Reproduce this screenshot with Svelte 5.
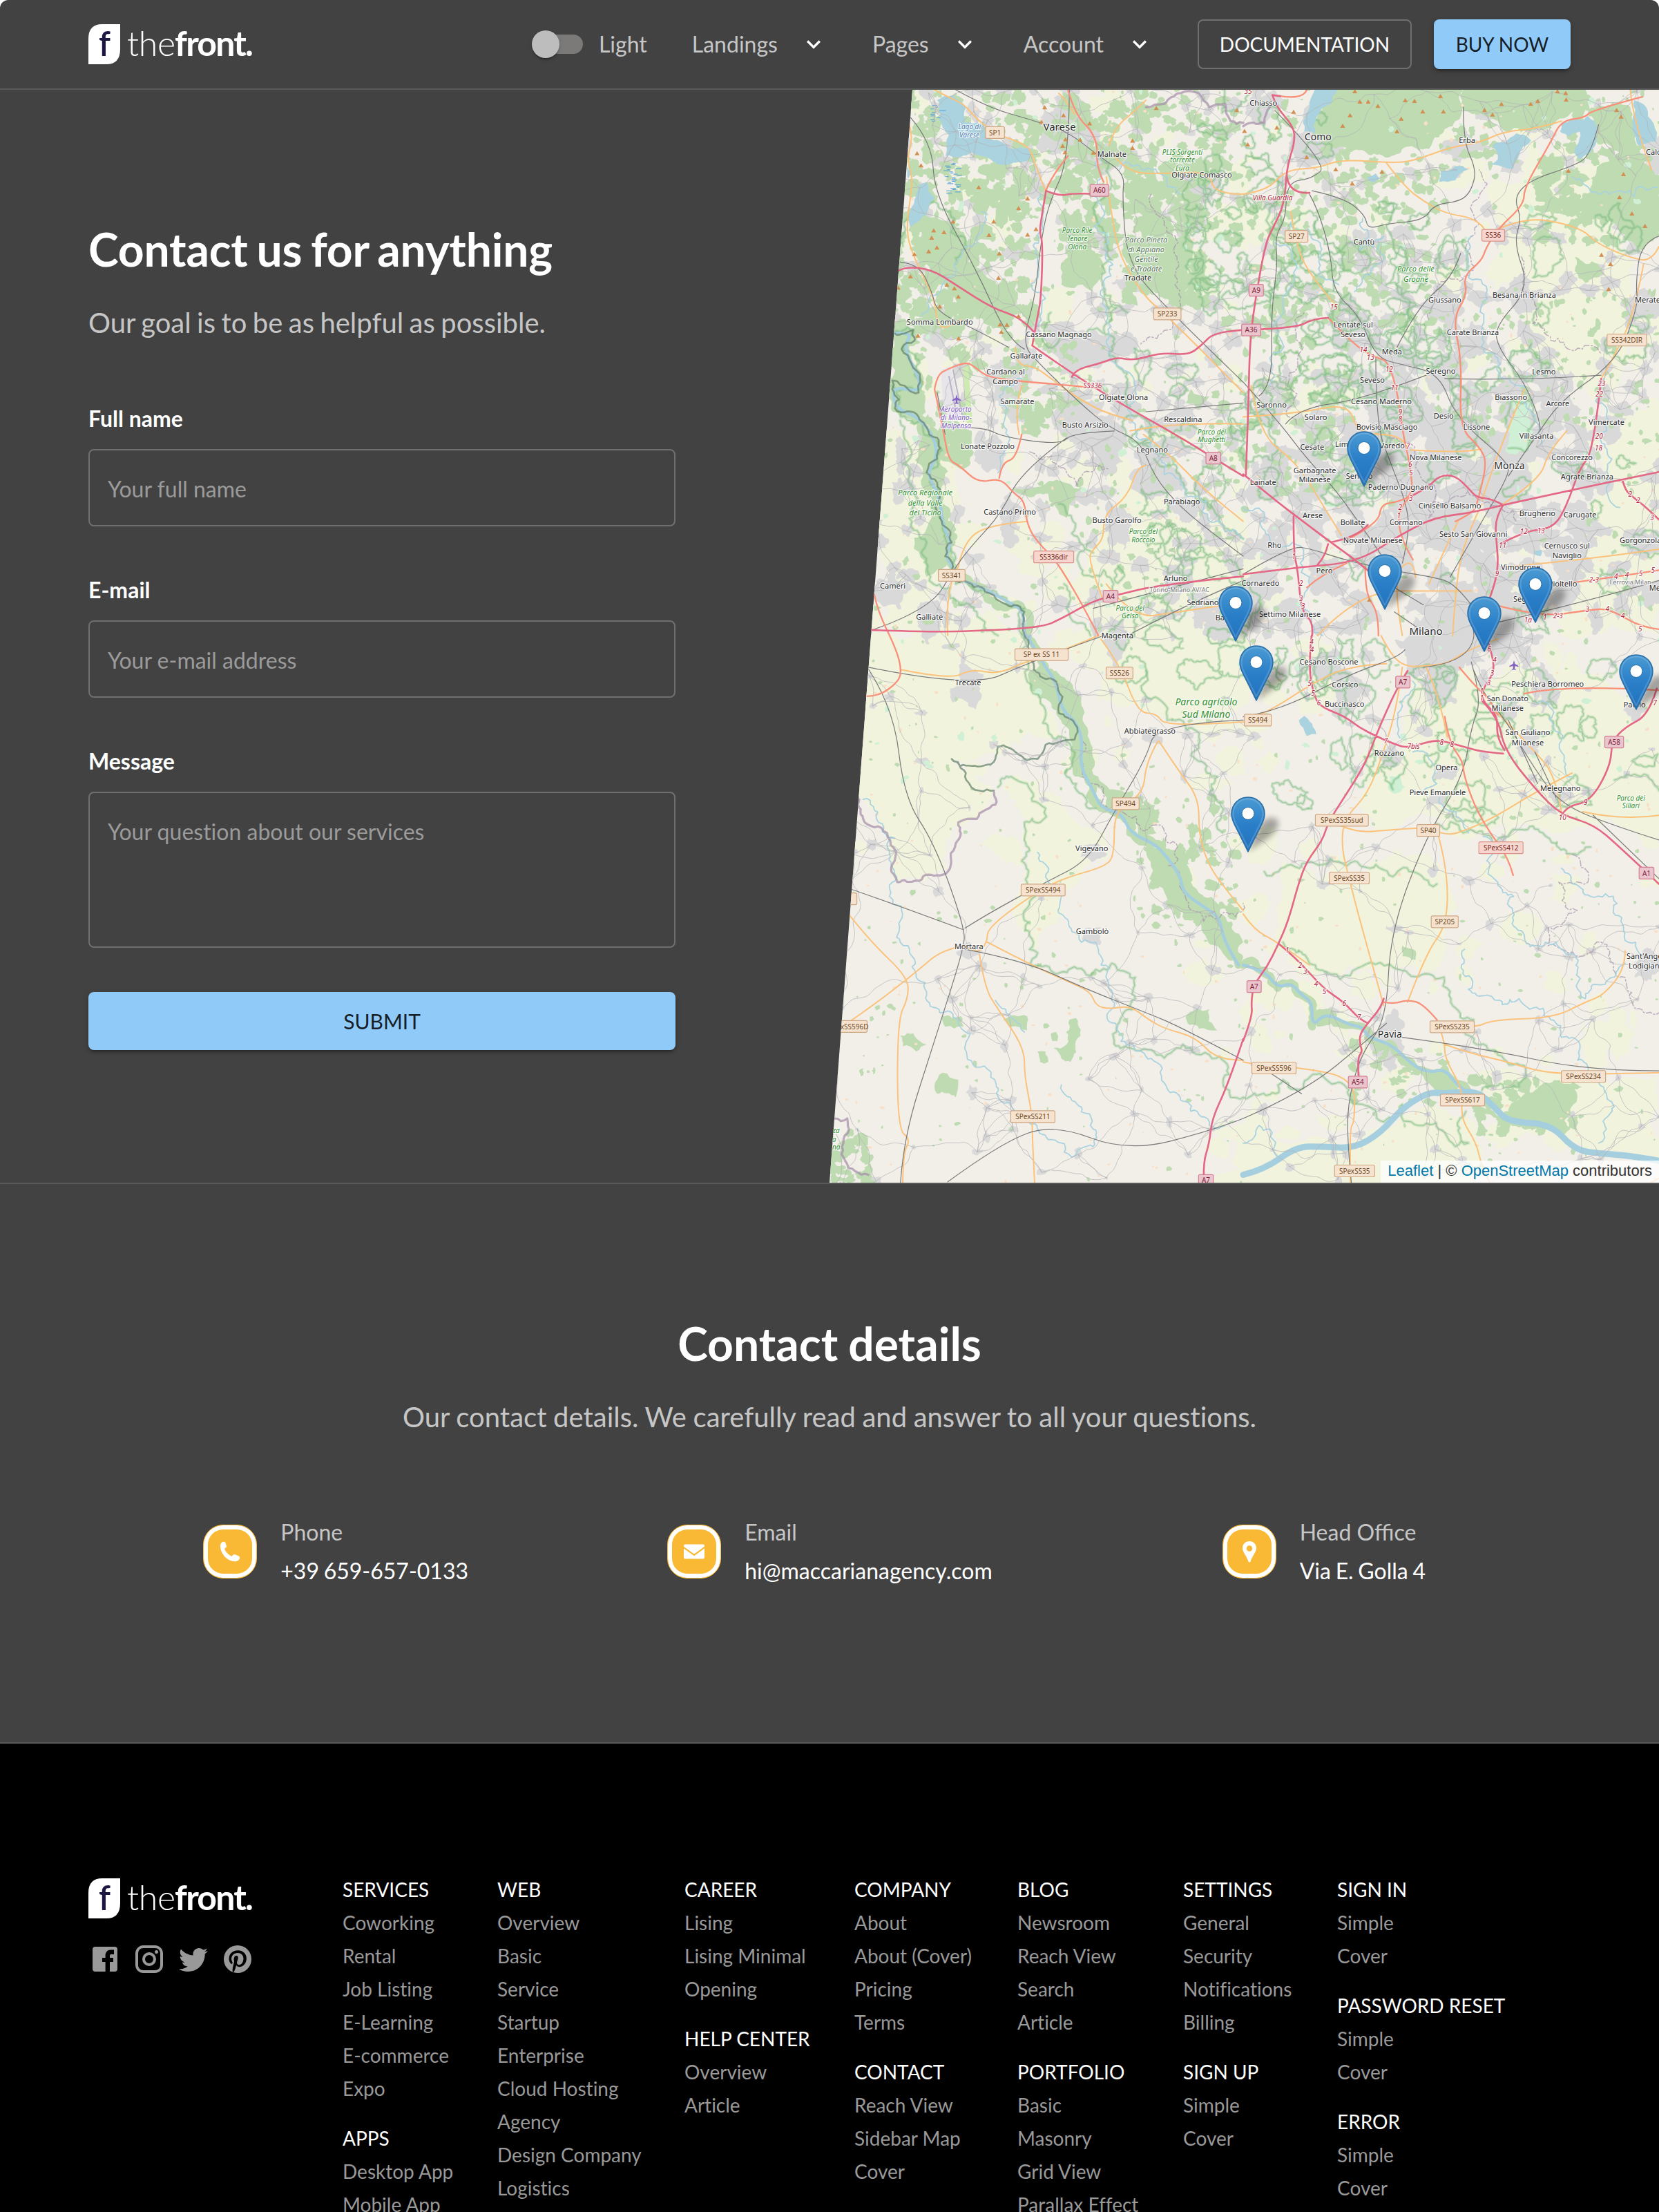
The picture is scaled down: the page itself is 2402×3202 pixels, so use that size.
<script>
  // ---------- site content ----------
  const fields = [
    { label: 'Full name', hint: 'Your full name' },
    { label: 'E-mail', hint: 'Your e-mail address' },
    { label: 'Message', hint: 'Your question about our services', tall: true }
  ];
  const contacts = [
    { icon: 'phone', label: 'Phone', value: '+39 659-657-0133' },
    { icon: 'mail', label: 'Email', value: 'hi@maccarianagency.com' },
    { icon: 'pin', label: 'Head Office', value: 'Via E. Golla 4' }
  ];
  const columns = [
    [['SERVICES', 'Coworking', 'Rental', 'Job Listing', 'E-Learning', 'E-commerce', 'Expo'], ['APPS', 'Desktop App', 'Mobile App']],
    [['WEB', 'Overview', 'Basic', 'Service', 'Startup', 'Enterprise', 'Cloud Hosting', 'Agency', 'Design Company', 'Logistics']],
    [['CAREER', 'Lising', 'Lising Minimal', 'Opening'], ['HELP CENTER', 'Overview', 'Article']],
    [['COMPANY', 'About', 'About (Cover)', 'Pricing', 'Terms'], ['CONTACT', 'Reach View', 'Sidebar Map', 'Cover']],
    [['BLOG', 'Newsroom', 'Reach View', 'Search', 'Article'], ['PORTFOLIO', 'Basic', 'Masonry', 'Grid View', 'Parallax Effect']],
    [['SETTINGS', 'General', 'Security', 'Notifications', 'Billing'], ['SIGN UP', 'Simple', 'Cover']],
    [['SIGN IN', 'Simple', 'Cover'], ['PASSWORD RESET', 'Simple', 'Cover'], ['ERROR', 'Simple', 'Cover']]
  ];
  const social = [
    'M5 3h14a2 2 0 0 1 2 2v14a2 2 0 0 1-2 2h-3.500v-7h2.500v-3h-2.500V9.500c0-.8.700-1 1-1h2V5.300h-2.500C14 5.300 12.300 7 12.300 9.300V11H10v3h2.300v7H5a2 2 0 0 1-2-2V5a2 2 0 0 1 2-2z',
    'M7.800 2h8.400C19.400 2 22 4.600 22 7.800v8.400a5.800 5.800 0 0 1-5.800 5.800H7.800C4.600 22 2 19.400 2 16.200V7.800A5.800 5.800 0 0 1 7.800 2m-.2 2A3.600 3.600 0 0 0 4 7.600v8.800C4 18.390 5.610 20 7.600 20h8.800a3.600 3.600 0 0 0 3.600-3.600V7.600C20 5.610 18.390 4 16.400 4H7.600m9.650 1.500a1.250 1.250 0 1 1 0 2.500 1.250 1.250 0 0 1 0-2.500M12 7a5 5 0 1 1 0 10 5 5 0 0 1 0-10m0 2a3 3 0 1 0 0 6 3 3 0 0 0 0-6z',
    'M22.460 6c-.77.350-1.600.580-2.460.690.880-.53 1.560-1.370 1.880-2.380-.83.500-1.750.850-2.720 1.050C18.370 4.500 17.260 4 16 4c-2.350 0-4.270 1.920-4.270 4.290 0 .340.040.670.110.980C8.280 9.090 5.110 7.380 3 4.790c-.37.630-.58 1.370-.58 2.150 0 1.490.750 2.810 1.910 3.560-.71 0-1.370-.2-1.950-.5v.030c0 2.080 1.480 3.820 3.440 4.210a4.220 4.220 0 0 1-1.930.070 4.280 4.280 0 0 0 4 2.980 8.521 8.521 0 0 1-5.330 1.840c-.34 0-.68-.02-1.020-.06C3.440 20.290 5.700 21 8.120 21 16 21 20.330 14.460 20.330 8.790c0-.19 0-.37-.01-.56.840-.6 1.560-1.360 2.140-2.230z',
    'M9.040 21.540c.960.290 1.930.460 2.960.460a10 10 0 0 0 10-10A10 10 0 0 0 12 2 10 10 0 0 0 2 12c0 4.250 2.670 7.900 6.440 9.340-.09-.78-.18-2.070 0-2.960l1.150-4.940s-.29-.58-.29-1.500c0-1.380.860-2.410 1.840-2.410.860 0 1.260.630 1.260 1.440 0 .860-.57 2.090-.86 3.270-.17.980.520 1.840 1.520 1.840 1.780 0 3.160-1.900 3.160-4.580 0-2.400-1.720-4.040-4.190-4.040-2.820 0-4.480 2.100-4.480 4.310 0 .860.280 1.730.740 2.300.090.060.090.140.060.290l-.29 1.090c0 .170-.11.230-.28.110-1.280-.56-2.020-2.380-2.020-3.850 0-3.160 2.240-6.030 6.560-6.030 3.440 0 6.120 2.470 6.120 5.750 0 3.440-2.130 6.200-5.180 6.200-.97 0-1.920-.52-2.260-1.130l-.67 2.370c-.23.860-.86 2.010-1.290 2.700v-.03z'
  ];

  // ---------- map geometry ----------
  // The map is described on four sheets, each with its own 1568-unit grid.
  const sheets = {
    A: [1200, 130, 600 / 1568, 790 / 1568],
    B: [1800, 130, 602 / 1568, 790 / 1568],
    C: [1200, 920, 600 / 1568, 800 / 1568],
    D: [1800, 920, 602 / 1568, 800 / 1568]
  };
  const at = (q, x, y) => [sheets[q][0] + x * sheets[q][2], sheets[q][1] + y * sheets[q][3]];
  const pts = (s) => {
    const q = s[0];
    const n = s.slice(2).trim().split(/\s+/).map(Number);
    const out = [];
    for (let i = 0; i < n.length; i += 2) out.push(at(q, n[i], n[i + 1]));
    return out;
  };
  let seed = 20417;
  const rnd = () => {
    seed = (seed + 0x6d2b79f5) | 0;
    let t = Math.imul(seed ^ (seed >>> 15), 1 | seed);
    t = (t + Math.imul(t ^ (t >>> 7), 61 | t)) ^ t;
    return ((t ^ (t >>> 14)) >>> 0) / 4294967296;
  };
  const f = (v) => v.toFixed(1);
  const line = (p, close = false) => 'M' + p.map(([x, y]) => f(x) + ' ' + f(y)).join('L') + (close ? 'Z' : '');
  function smooth(p) {
    if (p.length < 3) return line(p);
    let d = `M${f(p[0][0])} ${f(p[0][1])}`;
    for (let i = 1; i < p.length - 1; i++) {
      const last = i === p.length - 2;
      const ex = last ? p[i + 1][0] : (p[i][0] + p[i + 1][0]) / 2;
      const ey = last ? p[i + 1][1] : (p[i][1] + p[i + 1][1]) / 2;
      d += `Q${f(p[i][0])} ${f(p[i][1])} ${f(ex)} ${f(ey)}`;
    }
    return d;
  }
  function rough(p, amp = 0.16, min = 7) {
    let cur = p;
    for (let k = 0; k < 4; k++) {
      const next = [cur[0]];
      for (let i = 1; i < cur.length; i++) {
        const [ax, ay] = cur[i - 1];
        const [bx, by] = cur[i];
        const len = Math.hypot(bx - ax, by - ay);
        if (len > min) {
          const o = (rnd() - 0.5) * 2 * amp;
          next.push([(ax + bx) / 2 - (by - ay) * o, (ay + by) / 2 + (bx - ax) * o]);
        }
        next.push([bx, by]);
      }
      cur = next;
    }
    return cur;
  }
  function blob(x, y, r, n = 9, wild = 0.75) {
    const p = [];
    const sx = 0.7 + rnd() * 0.7;
    for (let i = 0; i < n; i++) {
      const a = (i / n) * Math.PI * 2;
      const k = r * (1 - wild / 2 + rnd() * wild);
      p.push([x + Math.cos(a) * k * sx, y + (Math.sin(a) * k) / sx]);
    }
    p.push(p[0]);
    return line(rough(p, 0.3, 5), true);
  }
  const roads = (list) => list.map((s) => smooth(pts(s))).join('');
  const ragged = (list, amp = 0.22) => list.map((s) => line(rough(pts(s), amp))).join('');
  const area = (list, amp = 0.22) => list.map((s) => { const p = pts(s); p.push(p[0]); return line(rough(p, amp), true); }).join('');

  const towns = `A 873 110 Varese 15|A 1071 184 Malnate|A 1411 245 Olgiate Comasco|A 1170 539 Tradate|A 420 666 Somma Lombardo|A 870 702 Cassano Magnago|A 747 764 Gallarate|A 669 809 Cardano al|A 668 838 Campo|A 713 896 Samarate|A 1115 884 Olgiate Olona|A 970 962 Busto Arsizio|A 1340 946 Rescaldina|A 601 1025 Lonate Pozzolo|A 1224 1034 Legnano|A 1336 1183 Parabiago|A 685 1212 Castano Primo|A 1090 1237 Busto Garolfo|A 1312 1403 Arluno|A 1415 1473 Sedriano|A 242 1426 Cameri|A 381 1514 Galliate|A 1480 1516 Ba|B 76 37 Chiasso|B 282 137 Como 14|B 844 145 Erba|B 1555 178 Calco|B 456 436 Cantù|B 760 603 Giussano|B 1060 590 Besana in Brianza|B 1525 603 Merate|B 415 674 Lentate sul|B 414 702 Seveso|B 866 696 Carate Brianza|B 561 753 Meda|B 745 807 Seregno|B 487 833 Seveso|B 1134 809 Lesmo|B 521 896 Cesano Maderno|B 1010 883 Biassono|B 1186 902 Arcore|B 107 906 Saronno|B 274 940 Solaro|B 756 936 Desio|B 542 968 Bovisio Masciago|B 880 968 Lissone|B 1370 954 Vimercate|B 1106 994 Villasanta|B 260 1027 Cesate|B 405 1018 Limbiate|B 562 1023 Varedo|B 726 1056 Nova Milanese|B 1240 1055 Concorezzo|B 1004 1081 Monza 14|B 270 1093 Garbagnate|B 270 1120 Milanese|B 438 1110 Senago|B 1297 1111 Agrate Brianza|B 75 1128 Lainate|B 594 1142 Paderno Dugnano|B 779 1194 Cinisello Balsamo|B 262 1222 Arese|B 1109 1216 Brugherio|B 1270 1220 Carugate|B 413 1243 Bollate|B 614 1243 Cormano|B 489 1294 Novate Milanese|B 868 1277 Sesto San Giovanni|B 1221 1309 Cernusco sul|B 1221 1338 Naviglio|B 1498 1295 Gorgonzola|B 118 1307 Rho|B 1046 1372 Vimodrone|B 306 1382 Pero|B 65 1418 Cornaredo|B 1205 1420 Pioltello|B 1552 1432 Me|B 1070 1463 Segrate|B 176 1506 Settimo Milanese|B 689 1559 Milano 15|C 1092 0 Magenta|C 527 134 Trecate|C 1215 271 Abbiategrasso|C 995 603 Vigevano|C 997 838 Gambolò|C 530 882 Mortara|D 323 74 Cesano Boscone|D 384 140 Corsico|D 382 195 Buccinasco|D 551 333 Rozzano|D 767 375 Opera|D 733 444 Pieve Emanuele|D 1148 137 Peschiera Borromeo|D 997 178 San Donato|D 997 206 Milanese|D 1073 275 San Giuliano|D 1073 303 Milanese|D 1196 433 Melegnano|D 1476 196 Paullo|D 1525 909 Sant'Angelo|D 1520 937 Lodigiano|D 553 1133 Pavia 14`
    .split('|')
    .map((t) => {
      const m = t.match(/^(\w) (\d+) (\d+) (.+?)(?: (\d+))?$/);
      const [x, y] = at(m[1], +m[2], +m[3]);
      return { x, y: y + 4, name: m[4], size: m[5] ? +m[5] : 11 };
    });
  const parks = `A 1338 178 PLIS Sorgenti 10|A 1338 201 torrente 10|A 1338 224 Lura 10|A 940 403 Parco Rile 10|A 940 427 Tenore 10|A 940 451 Olona 10|A 1449 982 Parco dei 10|A 1449 1005 Mughetti 10|A 365 1157 Parco Regionale 11|A 365 1186 della Valle 11|A 365 1214 del Ticino 11|A 1190 1269 Parco del 10|A 1190 1292 Roccolo 10|A 1140 1488 Parco del 10|A 1140 1511 Gelso 10|B 651 515 Parco delle 11|B 651 544 Groane 11|C 1428 191 Parco agricolo 14|C 1428 226 Sud Milano 14|D 1462 460 Parco dei 10|D 1462 483 Sillari 10|C 28 1404 za 10|C 20 1428 a 10|C 28 1450 na 10`
    .split('|').map((t) => {
      const m = t.match(/^(\w) (\d+) (\d+) (.+) (\d+)$/);
      const [x, y] = at(m[1], +m[2], +m[3]);
      return { x, y: y + 4, name: m[4], size: +m[5] };
    });
  const special = [
    ['A', 532, 106, 'Lago di', 'lake'], ['A', 532, 130, 'Varese', 'lake'],
    ['A', 1201, 430, 'Parco Pineta', 'reserve'], ['A', 1201, 458, 'di Appiano', 'reserve'], ['A', 1201, 486, 'Gentile', 'reserve'], ['A', 1201, 514, 'e Tradate', 'reserve'],
    ['A', 482, 917, 'Aeroporto', 'airport'], ['A', 482, 941, 'di Milano-', 'airport'], ['A', 482, 965, 'Malpensa', 'airport'],
    ['A', 998, 850, 'SS336', 'exit'], ['B', 111, 309, 'Villa Guardia', 'exit'], ['B', 18, 4, '35', 'exit'],
    ['A', 1327, 1436, 'Torino-Milano AV/AC', 'rail'], ['B', 1460, 1414, 'Ferrovia Milan', 'rail']
  ].map(([q, x, y, name, kind]) => ({ x: at(q, x, y)[0], y: at(q, x, y)[1] + 4, name, kind }));
  const exits = `B 342 623 15|B 453 746 14|B 480 768 13|B 550 801 12|B 571 856 11|B 592 924 9|B 592 944 8|B 621 1025 7|B 630 1076 6|B 632 1100 5|B 632 1174 3|B 592 1199 2|B 587 1222 1|B 1351 843 23|B 1343 873 22|B 1342 994 20|B 1340 1028 18|B 1459 1162 2|B 1490 1178 2|B 1542 1228 3|B 1058 1268 12|B 1123 1267 13|B 978 1307 11|B 957 1390 9|B 191 1340 1|B 218 1418 2|B 218 1461 3|B 226 1482 3|B 1323 1408 2-3|B 1406 1398 4|B 1447 1394 4|B 1499 1389 5|B 1545 1379 5|B 1074 1522 1a|B 1138 1514 1|B 1187 1511 2-3|B 1298 1493 3|B 1373 1491 4|B 1432 1511 4|B 1497 1549 5|D 258 18 4|D 259 40 4|D 250 136 5|D 263 162 5|D 285 191 6|D 538 297 7|D 642 314 7bis|D 748 301 8|D 787 307 8|D 927 38 6|D 948 68 4|D 939 106 3|D 926 134 3|D 899 156 1|D 899 176 1|D 1291 472 9|D 1204 516 10|D 1553 190 7|D 166 892 1|D 214 934 2|D 234 953 3|D 275 987 4|D 306 1009 5|D 381 1043 6|D 437 1081 7`
    .split('|').map((t) => { const [q, x, y, n] = t.split(' '); const p = at(q, +x, +y); return { x: p[0], y: p[1] + 4, n }; });
  const shields = `A 629 123 71 o SP1|A 1024 289 71 m A60|A 1281 644 103 o SP233|A 1455 1058 56 m A8|A 851 1342 151 t SS336dir|A 465 1395 101 o SS341|A 1066 1455 56 m A4|B 201 421 86 o SP27|B 943 418 86 t SS36|B 49 576 54 m A9|B 30 690 72 m A36|B 1447 719 150 o SS342DIR|C 805 54 201 o SP ex SS 11|C 1100 106 101 o SS526|C 1123 477 102 o SP494|C 811 722 166 o SPexSS494|C 75 1109 140 o SPexSS596D|C 60 747 92 o SS|C 772 1365 167 o SPexSS211|C 1427 1546 56 m A7|D 602 132 54 m A7|D 55 240 102 o SS494|D 372 524 200 o SPexSS35sud|D 698 553 86 o SP40|D 972 602 167 t SPexSS412|D 400 688 151 o SPexSS35|D 1399 302 71 m A58|D 1521 674 56 m A1|D 760 812 102 o SP205|D 41 996 54 m A7|D 788 1110 167 o SPexSS235|D 116 1227 167 o SPexSS596|D 432 1267 71 m A54|D 827 1318 167 o SPexSS617|D 1283 1251 167 o SPexSS234|D 420 1519 151 o SPexSS35`
    .split('|').map((t) => {
      const m = t.match(/^(\w) (\d+) (\d+) (\d+) (\w) (.+)$/);
      const [x, y] = at(m[1], +m[2], +m[3]);
      return { x, y, w: +m[4] * 0.3835, kind: m[5], name: m[6] };
    });
  const peaks = `A 817 50 888 73 805 92 896 142 885 161 894 179 951 143 987 96 1001 180 1149 146 1149 167 1239 52 1544 58 334 182 349 217 567 280 752 312 718 340 784 400 752 416 624 378 606 417 645 470 642 540 397 404 436 409 389 425 409 453 378 464 470 378 324 472 309 536 447 560 475 570 490 594 420 622 337 706 491 714 718 650 674 675 648 674 653 695 262 568|B 421 4 440 34 471 34 508 46 611 30 646 32 677 62 744 18 755 62 596 83 580 119 403 73 375 103 190 63 127 108 5 118 17 157 239 193 349 228 411 269 523 235 910 58 940 71 974 40 1084 40 1111 32 1185 4 1216 9 1218 28 1226 232 1408 58 1425 77 1434 242 1419 308 1466 355 1515 391 1351 474 1385 500 1378 572 476 1465`
    .split('|').flatMap((s) => pts(s)).map(([x, y]) => `M${f(x)} ${f(y - 3)}l3.600 6h-7.200z`).join('');

  // Scattered land cover
  const woodZones = [
    [1320, 130, 1560, 300, 120, 9], [1290, 240, 1500, 480, 150, 12], [1540, 230, 1620, 380, 60, 10],
    [1630, 240, 1740, 440, 90, 13], [1560, 130, 1800, 250, 110, 8], [1800, 250, 2080, 470, 160, 8],
    [1850, 130, 2402, 260, 110, 8], [2230, 230, 2402, 350, 80, 12], [1290, 420, 1420, 620, 60, 9],
    [1850, 430, 1960, 720, 100, 7], [1450, 470, 1560, 620, 70, 7], [1640, 150, 1800, 420, 90, 7], [1200, 1640, 1260, 1712, 40, 8],
    [2130, 1560, 2290, 1640, 40, 10], [1650, 1150, 1790, 1350, 70, 8], [1950, 1500, 2100, 1600, 30, 7], [1760, 460, 1850, 700, 60, 6],
    [2080, 420, 2402, 640, 110, 5], [1560, 640, 1800, 900, 60, 5]
  ];
  let woods = '';
  for (const [x0, y0, x1, y1, n, r] of woodZones)
    for (let i = 0; i < n; i++) woods += blob(x0 + rnd() * (x1 - x0), y0 + rnd() * (y1 - y0), r * (0.35 + rnd() * 0.9), 7);
  for (let i = 0; i < 900; i++) {
    const y = 130 + Math.pow(rnd(), 1.4) * 1582;
    woods += blob(1201 + rnd() * 1201, y, 1.2 + rnd() * (y < 900 ? 4.5 : 3), 6);
  }
  let farmland = '';
  for (let i = 0; i < 420; i++) {
    const x = 1201 + rnd() * 1201;
    const y = 130 + rnd() * 1582;
    if (x < 1700 && y > 1240) continue;
    farmland += blob(x, y, 6 + rnd() * 20, 8);
  }
  const bigFarm = area(['A 200 980 420 1010 400 1320 460 1568 160 1568', 'C 155 0 740 0 800 180 900 290 640 340 480 350 620 440 560 520 480 540 450 660 260 700 220 560 120 460', 'A 1100 1100 1568 1200 1568 1568 1000 1568 980 1300', 'D 150 640 700 620 740 940 540 960 300 960 120 850', 'D 650 120 1568 180 1568 560 1200 560 900 560 500 560 460 380', 'C 740 530 900 480 1050 560 1060 640 900 720 780 900 740 700', 'D 0 1420 400 1470 700 1330 900 1450 860 1568 0 1568', 'B 950 250 1400 300 1500 700 1330 900 1000 560', 'D 880 1240 1568 1250 1568 1480 1250 1440 950 1350', 'B 1350 900 1568 900 1568 1568 1200 1568 1300 1200', 'C 900 0 1568 0 1568 200 1280 240 1180 220 1060 100']);

  // Settlements and the lanes that link them
  const nodes = [];
  while (nodes.length < 700) {
    const x = 1195 + rnd() * 1215;
    const y = 125 + rnd() * 1592;
    const metro = Math.exp(-(((x - 2080) / 260) ** 2) - ((y - 760) / 280) ** 2);
    const d = y < 920 ? 0.55 + metro * 0.7 : 0.2 + metro * 0.7;
    if (rnd() < d && nodes.every((n) => Math.hypot(n[0] - x, n[1] - y) > 17)) nodes.push([x, y, metro]);
  }
  let lanes = '';
  nodes.forEach((a, i) => {
    nodes
      .map((b, j) => [Math.hypot(a[0] - b[0], a[1] - b[1]), j])
      .sort((p, q) => p[0] - q[0])
      .slice(1, 5)
      .forEach(([, j]) => {
        if (j > i || rnd() < 0.15) lanes += smooth(rough([[a[0], a[1]], [nodes[j][0], nodes[j][1]]], 0.17, 12));
      });
  });
  let built = '';
  let specks = '';
  for (const [x, y, m] of nodes) built += blob(x, y, (y < 920 ? 7 : 2.5) + rnd() * 6 + m * 9, 10);
  for (const t of towns) built += blob(t.x, t.y + 4, t.size > 12 ? 32 : t.y < 1010 ? 24 : 14, 12);
  for (let i = 0; i < 14; i++) built += blob(2050 + rnd() * 130, 850 + rnd() * 130, 34, 12);
  for (const [x, y] of [[1560, 600], [1600, 640], [1680, 690], [1555, 505], [2190, 640], [2160, 700], [2010, 590], [2060, 600], [1590, 500], [1550, 200], [1545, 170], [2100, 640], [1980, 650], [2100, 760], [2060, 700]]) built += blob(x, y, 34, 12);
  for (let i = 0; i < 450; i++) specks += blob(1201 + rnd() * 1201, 130 + rnd() * 1582, 1.2 + rnd() * 1.7, 5);
  let mint = '';
  for (let i = 0; i < 140; i++) mint += blob(1201 + rnd() * 1201, 130 + rnd() * 1000, 2 + rnd() * 4, 6);
  mint += area(['B 1010 900 1040 890 1095 900 1095 980 1060 1040 990 1040 1000 980', 'D 550 400 590 390 610 430 570 450 545 430']);
  let outlines = '';
  for (let i = 0; i < 170; i++) {
    const zone = i % 5;
    const x = zone === 0 ? 1850 + rnd() * 550 : zone === 1 ? 1600 + rnd() * 260 : zone === 2 ? 1850 + rnd() * 550 : zone === 3 ? 1880 + rnd() * 250 : 1720 + rnd() * 200;
    const y = zone === 0 ? 930 + rnd() * 260 : zone === 1 ? 520 + rnd() * 480 : zone === 2 ? 300 + rnd() * 600 : zone === 3 ? 280 + rnd() * 420 : 140 + rnd() * 300;
    outlines += blob(x, y, 8 + rnd() * 18, 8, 0.9);
  }

  const bigWoods = area(['B 330 0 820 0 800 90 740 130 700 170 560 190 470 185 330 165 260 130 300 60', 'B 830 0 1290 0 1300 60 1180 90 1000 120 960 90 830 60', 'B 1300 70 1460 50 1480 130 1568 280 1568 420 1500 420 1400 380 1290 330 1310 280 1420 180 1340 140', 'A 1190 300 1300 420 1380 470 1360 560 1290 610 1230 580 1200 470 1170 380', 'A 880 400 1000 340 1040 520 1000 580 880 560 920 480', 'A 330 350 520 430 590 530 700 560 700 640 660 690 560 660 420 560 330 480', 'A 245 710 320 690 350 860 420 1010 410 1180 450 1360 370 1400 390 1180 340 1020 240 900', 'A 690 1150 800 1140 900 1130 960 1140 900 1230 830 1160', 'B 1250 480 1340 500 1360 530 1290 555 1250 520', 'A 720 920 800 900 790 1000 730 990', 'A 1370 860 1440 880 1400 920 1350 900', 'D 860 1330 960 1370 1100 1290 1250 1280 1260 1310 1200 1400 1150 1385 960 1370', 'D 560 1180 640 1200 780 1240 820 1300 700 1270 580 1190', 'C 760 100 860 100 960 240 1040 420 1150 440 1240 560 1180 570 1050 500 930 400 900 260 800 180', 'C 1190 600 1330 600 1370 700 1470 760 1568 870 1540 920 1430 860 1290 760', 'C 400 1280 430 1240 490 1260 480 1310 410 1300', 'C 1390 1060 1440 1060 1470 1120 1400 1115 1350 1080', 'A 430 950 540 980 500 1090 420 1060', 'C 430 1080 500 1080 510 1110 440 1110', 'C 660 1090 750 1080 750 1120 690 1110', 'D 600 880 640 890 650 920 600 910', 'C 840 1130 860 1125 865 1150 845 1150', 'C 910 1090 935 1085 935 1150 915 1210 880 1200 850 1170 900 1160', 'C 270 1135 370 1160 330 1180 280 1165', 'C 790 1180 820 1180 830 1210 800 1210', 'D 260 1065 340 1070 350 1100 280 1110']);
  const parkEdge = ragged([
    'A 240 700 320 690 280 740 350 850 240 850 260 920 350 950 410 1010 370 1100 420 1170 430 1260 470 1380 480 1420 600 1440 740 1490 740 1568',
    'A 270 950 300 1120 310 1250 370 1300 350 1330 380 1410 460 1430 560 1500 640 1568',
    'C 740 0 800 180 830 270 900 300 920 370 900 400 960 450 1010 490', 'C 640 430 690 400 750 420 770 470 820 490 800 530 740 530 740 580 760 610 730 640 750 700 780 740 760 890 790 900 770 940 860 960 940 945 1040 945 1070 930 1140 970 1160 970 1160 1030 1110 1080 1080 1150 1140 1170 1240 1190 1340 1160 1450 1200 1520 1310 1568 1310',
    'C 1200 100 1220 180 1280 240 1390 270 1370 340 1430 390 1470 400 1440 450 1490 500 1490 560', 'A 1040 560 1040 690 1080 730 1130 850 1140 910', 'A 1030 180 1020 320 1050 430 1030 540 1060 630 1130 640', 'B 30 180 120 240 100 340 130 560 120 760', 'B 270 380 340 440 340 580 430 640 480 760', 'B 500 350 580 330 620 480 540 560 620 640 560 700', 'B 350 900 290 880 300 780 380 760 400 830 350 900', 'B 990 960 1010 890 1090 890 1090 1010 1060 1040 1000 1030', 'A 990 1300 950 1370 1000 1400 1040 1380 1080 1480', 'A 890 1420 900 1490 990 1568', 'A 280 450 330 350 460 350 520 450 480 500',
    'D 80 670 180 650 300 650 420 640 500 650 550 680 640 670 730 705', 'D 720 540 830 560 880 560 1000 570 1050 550 1130 560 1180 590 1240 620 1310 600', 'D 150 870 250 930 330 960 600 950 700 960 780 1010 790 1050 870 1090 820 1110 880 1160 960 1190 1060 1220 1040 1280 900 1290', 'D 0 1310 150 1260 300 1250 350 1270 450 1330 530 1380 600 1330 680 1390 760 1410 800 1450 850 1440 840 1350', 'D 1400 410 1500 400 1568 440', 'A 840 640 830 740 1040 700', 'A 1000 1330 950 1300 870 1190', 'A 1230 1060 1330 1110 1420 1180 1500 1260 1568 1290'
  ], 0.3);
  const borders = ragged(['C 465 350 540 370 630 350 640 315 790 350 820 310 930 295 930 250 870 220 860 130 810 120 740 0', 'C 465 350 520 410 570 440 625 440', 'A 250 700 320 690 325 720 275 745 345 830 340 870 300 860 240 835 240 860 265 890 250 915 340 940 380 990 410 1000 410 1060 370 1100 420 1170 430 1250 465 1300 440 1340 470 1370 470 1400 580 1430 700 1480 740 1500 740 1568'], 0.2);
  const provinces = ragged(['C 625 445 630 480 560 520 490 530 480 590 450 670 410 680 330 695 260 700 240 650 220 560 130 520 115 465', 'A 1200 50 1270 40 1330 10 1400 10 1440 50 1500 40 1520 90 1568 95', 'B 0 105 80 95 100 50', 'C 20 1370 70 1370 50 1450 100 1520 150 1530'], 0.2);
  const districts = ragged(['A 1220 300 1270 380 1310 420 1310 560 1260 700 1180 730', 'B 200 960 160 930 200 700 230 640', 'B 700 660 740 560 860 500 920 270 890 230', 'B 1050 480 1090 600 1160 720 1250 750 1350 760', 'D 1240 620 1300 700 1190 700 1260 780 1150 830 1150 880 1270 910 1350 870 1440 970 1480 1060 1568 1070', 'C 960 300 960 390 1040 430 1030 480 1110 500 1180 550 1320 600 1330 700 1480 800 1568 760', 'A 760 1040 900 1100 940 1140 1060 1090', 'B 550 1000 700 1230 900 1180 1030 1240'], 0.3);
  const lakes = area(['A 410 30 470 15 520 50 515 95 590 90 600 140 690 170 765 170 760 195 690 213 620 205 540 180 500 193 440 190 455 130', 'A 340 275 370 265 400 310 370 360 310 395 320 330', 'B 270 0 355 0 330 40 275 80 270 125 230 120 225 90 250 50', 'B 940 160 1030 125 1085 145 1040 190 1020 225 925 215 960 200', 'B 745 235 800 220 850 228 800 260 740 265', 'B 1200 95 1240 82 1295 90 1270 120 1230 135 1195 120', 'B 1260 100 1300 75 1335 110 1310 180 1270 200 1248 180', 'B 1475 30 1520 50 1555 150 1490 160 1468 100', 'B 470 250 500 240 515 255 490 266 470 258', 'A 294 220 312 235 300 255', 'D 210 240 230 228 260 250 275 280 240 285', 'D 1440 100 1460 110 1450 130', 'B 1100 1325 1125 1322 1122 1340 1100 1336', 'C 740 0 770 0 765 15 745 12'], 0.14);
  const ticino = [
    'A 250 700 320 695 280 740 345 830 340 870 240 850 250 915 340 940 400 1000 410 1060 370 1100 420 1170 430 1250 465 1300 440 1340 470 1370 470 1400 580 1430 700 1480 740 1500 740 1568',
    'C 750 0 810 80 860 130 880 210 940 250 960 300 950 370 1000 440 1030 490 1110 505 1140 560 1230 590 1270 620 1330 680 1340 730 1420 770 1480 800 1495 870 1550 935',
    'D 0 935 80 950 130 1000 180 985 220 1020 260 1040 260 1110 310 1070 400 1105 450 1110 470 1140 560 1160 640 1220 700 1240 760 1230 800 1270 850 1300'
  ];
  const valley = ticino.map((s) => line(rough(pts(s), 0.3))).join('');
  const po = roads(['D 0 1530 80 1515 200 1450 300 1450 420 1455 520 1410 600 1340 700 1295 760 1300 880 1290 950 1340 1000 1380 1160 1385 1250 1460 1350 1470 1450 1475 1568 1490']);
  const streams = ragged([
    'C 130 465 180 520 250 575 240 700 230 740 270 810 270 870 300 880 330 960 370 1020 420 1070 490 1090 520 1180 600 1230 650 1320 700 1345 780 1385 830 1430 880 1440 920 1480 1000 1450 1000 1400 940 1330 880 1275',
    'C 790 615 830 670 830 700 880 740 880 790 920 840 1010 870 1030 910 1060 990 1070 1060 1150 1160 1220 1200 1270 1270 1330 1310 1370 1350 1440 1390 1500 1390',
    'D 905 570 940 620 960 700 1020 740 1060 850 1100 880 1180 870 1260 950 1290 1030 1390 970 1440 930', 'D 835 890 830 950 920 1020 1040 1030 1080 1060 1160 1090 1200 1140 1270 1160 1300 1240', 'D 740 460 820 520 850 560', 'D 1200 660 1310 740 1410 760 1480 870 1568 920', 'D 1110 190 1170 260 1210 340 1240 400', 'A 1020 180 1030 330 1060 440 1040 560 1060 700 1110 800 1130 910 1160 980 1250 1060 1330 1120 1430 1180 1500 1270 1568 1290', 'A 800 300 810 400 790 500 820 600 790 680', 'A 640 1100 660 960 730 830', 'A 580 350 560 440 500 480 480 530 400 590 350 650', 'B 860 420 850 540 900 680 960 770 1060 850 1100 950 1120 1020', 'B 450 370 440 460 530 420 530 490 460 530 420 580', 'B 120 440 150 620 100 850', 'B 180 380 290 440 360 560', 'B 1240 250 1380 300 1560 280', 'B 1360 830 1380 950 1390 1060 1420 1200', 'A 1100 230 1250 240 1330 300', 'D 1300 1240 1370 1300 1370 1400 1340 1440', 'D 0 1440 60 1390 100 1400 130 1480', 'B 0 1200 100 1290 250 1400 300 1568', 'D 590 290 600 200 640 130', 'D 640 330 700 350 730 420 680 440', 'C 630 1035 700 1090 740 1125'
  ], 0.3);
  const marsh = [];
  for (let i = 0; i < 26; i++) marsh.push(at('A', 432 + rnd() * 60, 212 + i * 3.4));
  for (let i = 0; i < 10; i++) marsh.push(at('A', 385 + rnd() * 50, 45 + i * 5));
  const marshLines = marsh.map(([x, y]) => `M${f(x)} ${f(y)}h${f(3 + rnd() * 6)}`).join('');
  const motorways = roads([
    'A 262 520 290 508 390 516 480 560 620 628 730 655 775 695', 'A 822 290 806 360 797 410 810 440 803 600 790 650 770 735', 'A 770 735 920 815 1100 900 1330 998 1460 1060 1568 1110', 'A 822 290 870 306 930 296 1030 300', 'A 920 825 930 805 1030 785 1090 768 1150 778 1260 755 1360 762 1410 735 1460 695 1568 690', 'A 160 1552 310 1556 480 1557 800 1546 880 1520 1000 1468 1100 1450 1250 1422 1568 1398',
    'B 110 15 125 50 190 105 195 150 165 220 155 330 110 400 85 440 50 580 25 720 20 900 10 1110', 'B 0 1105 10 1110 130 1185 200 1225 330 1300 440 1360 530 1420', 'B 0 690 200 685 260 658 320 655', 'B 165 250 175 300 250 296', 'B 0 1392 200 1372 430 1358 590 1280 720 1228 870 1215 980 1193', 'B 980 1193 1250 1148 1430 1120 1568 1098', 'B 640 1165 700 1140 740 1108 800 1108 850 1145 880 1172 940 1175 980 1193', 'B 980 1193 950 1230 955 1300 962 1360 950 1420 925 1470', 'B 970 1305 1060 1268 1170 1260 1220 1195 1270 1085 1320 1040 1350 830', 'B 1430 1120 1440 1150 1470 1170 1520 1200 1568 1235', 'B 190 1225 190 1330 205 1375 220 1500 265 1530 260 1568', 'B 330 1300 430 1285 470 1250', 'B 280 1365 310 1340 320 1305', 'B 110 15 140 18',
    'C 1568 1145 1510 1275 1450 1370 1440 1440 1415 1500 1420 1568', 'D 258 0 245 90 270 180 300 205 380 228 440 262 500 285 560 305 620 320 700 300 750 298 830 315 900 330 980 335', 'D 620 100 580 150 540 215 500 285 460 365 380 460 320 530 300 580 240 640 210 700 170 810 130 880 90 940 40 990 30 1040 35 1080 0 1150', 'D 135 875 200 915 300 1000 380 1040 440 1090 470 1100', 'D 530 1030 520 1055 470 1100 440 1130 440 1160 450 1180 430 1200 435 1250', 'D 915 0 950 75 935 120 900 155 905 190 960 225 955 290 985 325', 'D 900 185 960 230 985 325 1100 435 1200 510 1320 535 1420 600 1568 705', 'D 1200 510 1220 485 1310 470 1385 370 1390 300 1440 260 1530 225 1560 150'
  ]);
  const trunks = roads([
    'A 400 860 410 820 450 802 520 782 550 795 600 825 700 835 760 840 850 845 1030 858', 'A 400 860 420 930 435 990 455 1065 495 1080 565 1130 650 1115 700 1160 740 1180 750 1250 790 1300 850 1345 890 1390 960 1480 1020 1568', 'A 645 1115 655 1070 710 1060 730 990', 'A 905 190 840 250 822 290', 'A 1015 170 1010 220 1040 265', 'A 905 0 930 70 1010 130 1015 170', 'B 1505 20 1310 60 1290 80 1200 88 1160 150 1060 280 1058 330 960 400 915 455 900 490 830 535 845 590 790 655 825 780 815 970 890 1025 920 1070 885 1180 870 1215 800 1240', 'B 320 655 420 735 500 770 550 780 590 900 600 980 630 1080 640 1165 580 1185 520 1190 510 1245 400 1290', 'B 640 1165 590 1190 585 1280 640 1350', 'B 240 1430 300 1390 390 1360', 'B 460 1370 460 1450 510 1500 510 1568', 'B 950 1480 1120 1515 1300 1495 1380 1490 1500 1545 1568 1550', 'B 1200 1420 1400 1400 1568 1380', 'C 230 0 255 40 275 95 265 130 190 172 145 172', 'A 172 1450 185 1500 230 1568', 'D 815 90 870 140 930 180 960 225', 'D 1060 165 1200 140 1568 155', 'D 760 230 775 300 830 360 830 390 870 480 930 560 1000 630 1018 680', 'D 530 1040 570 1045 620 1033 680 1045 730 1090', 'B 140 18 225 28 240 0'
  ]);
  const primaries = roads([
    'A 400 0 450 20 510 40 560 85 640 130 760 160 780 215 820 290', 'A 300 90 320 130 295 200 320 260 290 400 320 480 400 600 410 670 440 690 500 660', 'A 705 740 710 790 780 795 850 835 950 890 1050 930 1150 950', 'A 730 850 700 920 720 990', 'A 1050 250 1070 360 1100 480 1200 600 1270 640 1568 870', 'A 1140 980 1300 955 1568 960', 'A 1200 1080 1170 1080 1130 1170 1040 1220 1040 1290 1000 1320 980 1350 1040 1470', 'A 1190 990 1280 1040 1420 1150 1568 1240', 'A 750 1240 600 1250 510 1300 490 1370', 'A 490 1370 440 1430 450 1568', 'A 1050 1420 1150 1520 1320 1500 1500 1480 1568 1478', 'A 1080 190 1130 240 1280 240 1440 235 1460 300 1568 300', 'A 870 10 900 30 930 70', 'A 1060 160 1080 110 1160 60 1200 30', 'B 0 300 90 290 160 230 280 225 370 200 560 210 640 205 780 165 900 150 980 120 1120 110 1200 90', 'B 540 210 610 280 680 320 760 355 880 370 910 400', 'B 960 400 1020 380 1130 370 1280 400 1330 440 1450 480 1540 495 1568 450', 'B 180 350 200 460 280 560 350 620', 'B 1460 0 1470 90 1540 230', 'B 1350 830 1420 740 1480 620 1510 500', 'B 0 940 200 930 400 900 430 990 600 990 620 1030', 'B 30 850 60 990 200 1070 290 1180 370 1280', 'B 630 1035 860 1045 900 1030', 'B 980 1190 1120 1120 1150 1040 1220 980', 'B 790 1568 800 1440 830 1300 900 1190', 'B 600 1568 560 1400 640 1340 650 1400', 'B 700 1420 810 1240', 'B 1000 1370 1300 1350 1568 1320', 'B 280 1568 440 1440 720 1440 860 1440', 'B 900 1180 960 1040 1060 860', 'C 275 97 460 125 540 95 640 110 740 75 900 40 1020 0', 'C 1030 10 1100 80 1170 220 1240 220 1275 260 1568 245', 'C 1250 300 1320 380 1400 460 1400 560 1430 640 1480 700 1568 780', 'C 1245 300 1200 360 1190 450 1080 495 1080 620 1050 655 880 690 760 740 600 830 600 870 560 905 515 880', 'C 515 880 430 890 330 955 150 1060 50 1110', 'C 80 795 160 870 300 970 300 1030 260 1090 260 1400 310 1430 280 1470 280 1568', 'C 570 905 590 1000 640 1060 740 1170 740 1250 770 1360 770 1430 780 1568', 'C 600 870 740 925 900 980 990 1010 1010 1050 1060 1060 1140 1050 1210 1090 1270 1115 1390 1140 1470 1205 1568 1205', 'D 0 790 40 835 130 870 250 935', 'D 0 245 100 215 250 140 400 85 540 80', 'D 520 0 560 60 620 90 700 85 770 80 860 35 960 10', 'D 600 90 580 200 530 330 470 450 380 520 370 600 400 690 430 780 500 970 530 1050', 'D 690 90 740 170 770 290', 'D 370 540 430 560 560 550 700 545', 'D 700 545 760 570 850 550 960 510 1100 445 1240 390', 'D 735 565 770 660 770 820 690 900 620 1040', 'D 730 1090 760 1150 760 1200 830 1290 820 1370 880 1440 900 1510 940 1568', 'D 760 1160 830 1180 1000 1210 1130 1240 1300 1245 1568 1240', 'D 730 1105 870 1115 940 1090 1170 1085 1290 1040 1360 1020 1440 945 1440 895', 'D 0 1210 100 1225 210 1225 420 1255 420 1380 400 1400 405 1568', 'D 960 220 1090 320 1180 400 1200 500', 'D 1280 500 1430 525 1568 510', 'D 1500 1568 1568 1540'
  ]);
  const railways = roads([
    'A 910 0 910 200 830 330 800 450 780 600 730 730 800 790 950 900 1060 970 1180 1010 1230 1110 1330 1200 1480 1290 1568 1340', 'A 310 80 390 150 400 300 560 520 680 720 740 745', 'A 270 495 340 500 390 580 410 640 560 690 680 740', 'A 480 0 600 50 760 85 905 120 1020 190 1120 240 1110 310 1130 500 1280 630 1568 840', 'A 1200 925 1568 900', 'A 490 970 590 970 660 998 880 1020 920 985 1080 980', 'A 900 1000 730 1095 650 1220 540 1310 480 1370 380 1495 165 1552', 'A 410 870 440 990', 'A 1130 1568 1350 1480 1568 1410', 'A 1000 1490 1568 1376',
    'B 0 840 130 950 240 1060 350 1150 470 1280 560 1380', 'B 60 880 110 850 105 640 130 500 120 420 160 370 165 265 260 255 320 215 120 60', 'B 250 300 280 340 330 470 340 580 440 650 500 770 600 790 740 815 800 940 1000 1070 1000 1110 900 1240 780 1400', 'B 500 770 500 960 560 1080 620 1200 625 1280 600 1360', 'B 160 960 210 915 450 890 690 820', 'B 1568 420 1500 440 1480 560 1490 620 1410 780 1200 890 1100 1000 1000 1110', 'B 760 830 1060 835 1350 820', 'B 580 740 660 620 790 540 820 470', 'B 830 50 830 150 880 230 860 290 820 320 720 330 680 375 540 385 470 400 460 360 380 310 260 290', 'B 0 1392 180 1310 260 1320 380 1350 550 1380 720 1400 800 1420 860 1480', 'B 570 1430 680 1480', 'B 960 1530 1300 1470 1568 1410', 'B 1340 100 1310 190 1240 220 1080 260 1020 310 1050 370 1020 440 1080 570 950 680 960 740 1060 840 1120 950 1120 980', 'B 570 1500 700 1568', 'B 860 1480 870 1568',
    'C 150 90 540 150 760 75 1040 0', 'C 150 95 245 205 285 460 400 590 515 830 510 890 400 1150 280 1430 270 1568', 'C 85 720 240 760 510 835', 'C 515 830 600 790 820 700 980 640 1080 500 1200 350 1240 250 1568 240', 'C 515 890 730 920 980 1005 1200 1070 1330 1110 1568 1205', 'C 450 1550 650 1440 850 1385 1130 1465 1450 1405 1568 1370', 'D 0 230 130 215 400 110 590 60 610 40', 'D 680 90 860 75 870 0', 'D 860 75 900 180 860 260 830 400 690 570 555 840 540 1090 450 1180 400 1300 390 1420 410 1568', 'D 870 100 900 160 990 240 1100 380 1200 480 1400 540 1568 580', 'D 1000 240 1110 420', 'D 1320 510 1568 690', 'D 600 1140 900 1170 1300 1235 1568 1235', 'D 0 1370 230 1295 480 1140 540 1100', 'D 60 1220 220 1300', 'D 1100 330 1180 460'
  ]);
  const markers = [[1975, 703], [1789, 927], [2005, 881], [2149, 942], [2223, 900], [1819, 1013], [2369, 1026], [1807, 1232]];
</script>

{#snippet logo()}
  <svg class="logo" width="240" height="58" viewBox="0 0 240 58" role="img" aria-label="thefront.">
    <path d="M20 0H46V36Q46 58 26 58H0V21Q0 0 20 0Z" fill="#fff" />
    <text x="15" y="46" class="mark" textLength="17" lengthAdjust="spacingAndGlyphs">f</text>
    <text x="56" y="46" class="thin" textLength="70" lengthAdjust="spacing">the</text>
    <text x="125" y="46" class="thick" textLength="114" lengthAdjust="spacing">front.</text>
  </svg>
{/snippet}

{#snippet chevron()}
  <svg width="40" height="40" viewBox="0 0 24 24" fill="#fff"><path d="M16.590 8.590 12 13.170 7.410 8.590 6 10l6 6 6-6z" /></svg>
{/snippet}

<div class="page">
  <header>
    {@render logo()}
    <nav>
      <span class="toggle"><span class="knob"></span></span>
      <span class="word">Light</span>
      {#each ['Landings', 'Pages', 'Account'] as item}
        <span class="item"><span class="word">{item}</span>{@render chevron()}</span>
      {/each}
      <button class="outlined">DOCUMENTATION</button>
      <button class="filled">BUY NOW</button>
    </nav>
  </header>

  <section class="hero">
    <div class="form">
      <h1>Contact us for anything</h1>
      <p class="lead goal">Our goal is to be as helpful as possible.</p>
      <div class="fields">
        {#each fields as field}
          <div class="field">
            <span class="label">{field.label}</span>
            <div class="input" class:tall={field.tall}>{field.hint}</div>
          </div>
        {/each}
        <button class="filled submit">SUBMIT</button>
      </div>
    </div>

    <div class="map">
      <svg width="1201" height="1582" viewBox="1201 130 1201 1582">
        <defs>
          <linearGradient id="pinFill" x1="0" y1="0" x2="0" y2="1">
            <stop offset="0" stop-color="#4b9bd3" />
            <stop offset="0.5" stop-color="#2a7fc8" />
            <stop offset="1" stop-color="#2272bd" />
          </linearGradient>
          <filter id="shade" x="-50%" y="-50%" width="200%" height="200%"><feGaussianBlur stdDeviation="4" /></filter>
        </defs>
        <rect x="1201" y="130" width="1201" height="1582" fill="#f2efe9" />
        <path d={bigFarm} fill="#f1f3dd" />
        <path d={farmland} fill="#f1f3dd" />
        <path d={built} fill="#d9d9d9" />
        <path d={bigWoods} fill="#bedbb1" />
        <path d={woods} fill="#bedbb1" />
        <path d={mint} fill="#d0f0d6" />
        <path d={specks} fill="#f9dfc6" />
        <path d={valley} class="valley" />
        <g class="park">
          <path d={parkEdge} class="wide" />
          <path d={outlines} class="wide" />
          <path d={parkEdge} class="thin-edge" />
          <path d={outlines} class="thin-edge" />
        </g>
        <path d="M1362 536L1376 530 1392 604 1378 612 1366 590Z" fill="#e7e5ea" />
        <path d="M1394 532L1402 530 1408 612 1400 612Z" fill="#cdebb0" />
        <path d="M1380 536L1395 610M1374 545L1386 604" stroke="#b9b3c8" stroke-width="2" />
        <path d={districts} class="district" />
        <path d={lakes} fill="#aad3df" />
        <path d={marshLines} class="marsh" />
        <path d={streams} class="stream" />
        <path d={roads(ticino)} class="river" />
        <path d={po} class="river po" />
        <path d={borders} class="border" />
        <path d={provinces} class="province" />
        <path d={lanes} class="lane" />
        <path d={primaries} class="primary" />
        <path d={railways} class="railway" />
        <path d={trunks} class="trunk" />
        <path d={motorways} class="motorway" />
        <path d={peaks} fill="#d18f52" />
        <path class="plane" d="M1385 571l1.500 5 5 3v1.500l-5-1.500-.4 3.500 1.600 1.500v1l-2.700-.8-2.700.8v-1l1.600-1.500-.4-3.500-5 1.500v-1.500l5-3z" />
        <path class="plane" d="M2192 956l1.500 5 5 3v1.500l-5-1.500-.4 3.500 1.600 1.500v1l-2.700-.8-2.700.8v-1l1.600-1.500-.4-3.500-5 1.500v-1.500l5-3z" />
        {#each exits as e}<text class="exit" x={e.x} y={e.y}>{e.n}</text>{/each}
        {#each special as s}<text class={s.kind} x={s.x} y={s.y}>{s.name}</text>{/each}
        {#each parks as p}<text class="parkname" x={p.x} y={p.y} font-size={p.size}>{p.name}</text>{/each}
        {#each towns as t}<text class="town" x={t.x} y={t.y} font-size={t.size}>{t.name}</text>{/each}
        {#each shields as s}
          <g class="shield {s.kind}">
            <rect x={s.x - s.w / 2} y={s.y - 8.500} width={s.w} height="17" rx="2" />
            <text x={s.x} y={s.y + 3.700}>{s.name}</text>
          </g>
        {/each}
        {#each markers as [x, y]}
          <g transform="translate({x - 25} {y - 79})">
            <path d="M25 80L40 44Q54 24 68 34Q72 46 54 60Z" fill="#000" opacity=".32" filter="url(#shade)" />
            <path d="M25 1C11 1 1 12 1 25c0 6 2.500 12 5 17L25 80 44 42c2.500-5 5-11 5-17C49 12 39 1 25 1z" fill="url(#pinFill)" stroke="#2a6fa8" stroke-width="1.5" />
            <path d="M25 3.500C12.500 3.500 3.500 13 3.500 25c0 5 2 10.500 4.500 15.500L25 74l17-33.500c2.500-5 4.500-10.500 4.500-15.500C46.500 13 37.500 3.500 25 3.500z" fill="none" stroke="#fff" stroke-opacity=".16" stroke-width="2" />
            <circle cx="25" cy="24.500" r="9" fill="#fff" stroke="#2a6fa8" stroke-width="1" />
          </g>
        {/each}
      </svg>
      <div class="credit"><b>Leaflet</b> | © <b>OpenStreetMap</b> contributors</div>
    </div>
  </section>

  <section class="details">
    <h2>Contact details</h2>
    <p class="lead">Our contact details. We carefully read and answer to all your questions.</p>
    <div class="contacts">
      {#each contacts as c}
        <div class="contact">
          <span class="badge">
            <svg width="32" height="32" viewBox="0 0 32 32" fill="#fff">
              {#if c.icon === 'phone'}
                <path d="M2 8C2 4.500 4 2 6.500 1.700c1.500-.2 2.700.5 3 1.800l1.400 4.300c.3 1-.1 2-.9 2.500L8 11.800c1.500 4.600 5.500 9 10.500 11l2.300-2.200c.7-.7 1.700-.8 2.500-.4l5.400 2.300c1.200.5 1.800 1.600 1.400 2.900-.8 2.700-3.600 4.800-7 4.800C12 30 2 19 2 8z" />
              {:else if c.icon === 'mail'}
                <path d="M3 5.500h26a2 2 0 0 1 2 2v1.200L16 19.500 1 8.700V7.500a2 2 0 0 1 2-2zM1 11.500l15 10.700 15-10.700v13a2 2 0 0 1-2 2H3a2 2 0 0 1-2-2z" />
              {:else}
                <path fill-rule="evenodd" d="M16 1C10 1 6 5.500 6 11c0 6 6.500 12 8.500 19.500.4 1.300 2.600 1.300 3 0C19.500 23 26 17 26 11 26 5.500 22 1 16 1zm0 6.200a4.300 4.300 0 1 1 0 8.600 4.300 4.300 0 0 1 0-8.600z" />
              {/if}
            </svg>
          </span>
          <div class="lines"><span class="dim">{c.label}</span><span class="value">{c.value}</span></div>
        </div>
      {/each}
    </div>
  </section>

  <footer>
    <div class="brand">
      {@render logo()}
      <div class="social">
        {#each social as d}<svg width="48" height="48" viewBox="0 0 24 24" fill="#999"><path fill-rule="evenodd" {d} /></svg>{/each}
      </div>
    </div>
    <div class="columns">
      {#each columns as groups}
        <div class="column">
          {#each groups as [title, ...links]}
            <ul>
              <li class="title">{title}</li>
              {#each links as link}<li>{link}</li>{/each}
            </ul>
          {/each}
        </div>
      {/each}
    </div>
  </footer>
</div>

<style>
  :global(body) { margin: 0; background: #fff; }
  .page { width: 2402px; height: 3202px; overflow: hidden; display: flex; flex-direction: column; background: #424242; color: #fff; font-family: Lato, sans-serif; font-size: 32px; font-variant-ligatures: no-common-ligatures; border-radius: 12px 12px 0 0; }
  header { box-sizing: border-box; height: 130px; flex: none; padding: 0 128px; border-bottom: 2px solid #5a5a5a; display: flex; align-items: center; justify-content: space-between; }
  .logo { display: block; overflow: visible; }
  .logo .mark { font-size: 50px; font-weight: 600; fill: #1b1642; }
  .logo .thin { font-size: 50px; font-weight: 300; fill: #fff; }
  .logo .thick { font-size: 50px; font-weight: 700; fill: #fff; }
  nav { display: flex; align-items: center; color: #c6c6c6; }
  .word { padding-bottom: 2px; }
  .toggle { width: 68px; height: 28px; border-radius: 14px; background: #7b7a78; margin-right: 23px; display: flex; align-items: center; }
  .knob { width: 40px; height: 40px; flex: none; margin-left: -6px; border-radius: 50%; background: #bdbdbd; box-shadow: 0 4px 2px -2px rgba(0, 0, 0, 0.2), 0 2px 2px rgba(0, 0, 0, 0.14), 0 2px 6px rgba(0, 0, 0, 0.12); }
  .item { display: flex; align-items: center; gap: 32px; margin-left: 65px; }
  button { box-sizing: border-box; height: 72px; padding: 0; border: 0; border-radius: 8px; font: 400 28px/1 Lato, sans-serif; display: flex; align-items: center; justify-content: center; }
  .outlined { width: 310px; margin-left: 64px; color: #fff; background: none; border: 2px solid #6f6f6f; }
  .filled { width: 198px; margin-left: 32px; background: #90caf9; color: rgba(0, 0, 0, 0.87); box-shadow: 0 6px 2px -4px rgba(0, 0, 0, 0.2), 0 4px 4px rgba(0, 0, 0, 0.14), 0 2px 10px rgba(0, 0, 0, 0.12); }
  .hero { flex: none; height: 1582px; border-bottom: 2px solid #5a5a5a; display: grid; grid-template-columns: 1201px 1201px; }
  .form { padding: 188px 223px 0 128px; }
  h1, h2 { margin: 0; font-size: 66px; line-height: 85px; font-weight: 700; }
  h1 { letter-spacing: -0.2px; word-spacing: -3px; }
  h2 { word-spacing: -1px; }
  .lead { margin: 32px 0 0; font-size: 40px; line-height: 64px; color: #c6c6c6; word-spacing: -0.6px; }
  .goal { word-spacing: -1.8px; }
  .fields { margin-top: 79px; display: flex; flex-direction: column; gap: 64px; }
  .field { display: flex; flex-direction: column; gap: 16px; }
  .label { font-weight: 700; line-height: 56px; }
  .input { box-sizing: border-box; height: 112px; border: 2px solid #6f6f6f; border-radius: 8px; padding: 37px 26px 0; line-height: 38px; color: #9b9b9b; }
  .input.tall { height: 226px; }
  .submit { width: 100%; height: 84px; margin-left: 0; font-size: 30px; }
  .map { position: relative; clip-path: polygon(10% 0, 100% 0, 100% 100%, 0 100%); }
  .map svg { display: block; }
  .credit { position: absolute; right: 0; bottom: 0; height: 32px; padding: 0 10px; background: rgba(255, 255, 255, 0.75); color: #333; font: 22px/30px 'Liberation Sans', sans-serif; white-space: nowrap; }
  .credit b { font-weight: 400; color: #0078a8; }
  .map path { stroke-linejoin: round; stroke-linecap: round; }
  .valley { fill: none; stroke: #bedbb1; stroke-width: 11; }
  .park path { fill: none; stroke: #7ebd83; }
  .park .wide { stroke-width: 4.5; opacity: 0.28; }
  .park .thin-edge { stroke-width: 1.3; opacity: 0.6; }
  .border { fill: none; stroke: #68866f; stroke-width: 2.6; opacity: 0.75; }
  .province { fill: none; stroke: #a58da8; stroke-width: 3.2; opacity: 0.7; }
  .district { fill: none; stroke: #a792ab; stroke-width: 1.5; stroke-dasharray: 8 3 2 3; opacity: 0.7; }
  .marsh { fill: none; stroke: #4f9fdc; stroke-width: 1; }
  .stream { fill: none; stroke: #aad3df; stroke-width: 1.8; }
  .river { fill: none; stroke: #a5cfde; stroke-width: 4.5; }
  .po { stroke-width: 9; }
  .lane { fill: none; stroke: #b4b4b6; stroke-width: 0.9; opacity: 0.8; }
  .primary { fill: none; stroke: #fbc27c; stroke-width: 2; }
  .trunk { fill: none; stroke: #f9917a; stroke-width: 2.3; }
  .motorway { fill: none; stroke: #e46885; stroke-width: 2.6; }
  .railway { fill: none; stroke: #7a7a7a; stroke-width: 1.2; }
  .plane { fill: #8461c4; }
  .map text { font-family: 'Noto Sans', sans-serif; text-anchor: middle; paint-order: stroke; stroke: rgba(255, 255, 255, 0.75); stroke-width: 2.5px; stroke-linejoin: round; }
  .map .town { fill: #2c2c2c; }
  .map .parkname { fill: #33902f; font-style: italic; }
  .map .lake { fill: #4d80b3; font-size: 10px; font-style: italic; }
  .map .reserve { fill: #5e7a5e; font-size: 11px; font-style: italic; }
  .map .airport { fill: #8461c4; font-size: 10px; font-style: italic; }
  .map .exit { fill: #b5283e; font-size: 10px; font-style: italic; }
  .map .rail { fill: #777; font-size: 9px; }
  .shield rect { fill: #f6e3cf; stroke: #cfa783; stroke-width: 1.2; }
  .shield.m rect { fill: #ebc5cd; stroke: #d37e93; }
  .shield.t rect { fill: #f6d6cf; stroke: #dd9488; }
  .map .shield text { font-size: 10px; fill: #6d4a28; stroke: none; }
  .map .shield.m text { fill: #7e1f3c; }
  .map .shield.t text { fill: #7a2a20; }
  .details { box-sizing: border-box; flex: none; height: 810px; padding: 188px 128px 0; border-bottom: 2px solid #5a5a5a; text-align: center; }
  .contacts { margin-top: 107px; display: grid; grid-template-columns: repeat(3, 1fr); text-align: left; }
  .contact { display: flex; align-items: center; justify-content: center; gap: 34px; padding-left: 1px; }
  .lines { display: flex; flex-direction: column; line-height: 56px; }
  .dim { color: #c6c6c6; font-variant-ligatures: normal; }
  .value { word-spacing: -1.5px; }
  .badge { box-sizing: border-box; width: 78px; height: 78px; border-radius: 29px; border: 1.5px solid #f9b934; background: #f9b934; box-shadow: inset 0 0 0 6px #fff; display: flex; align-items: center; justify-content: center; }
  footer { flex: 1; min-height: 0; background: #000; padding: 187px 128px 0; display: flex; }
  .brand { width: 368px; flex: none; padding-top: 8px; }
  .social { margin-top: 35px; display: flex; gap: 16px; }
  .columns { display: grid; grid-template-columns: 224px 271px 246px 236px 240px 223px auto; font-size: 28px; line-height: 48px; color: #999; white-space: nowrap; }
  .column { display: flex; flex-direction: column; gap: 24px; }
  ul { list-style: none; margin: 0; padding: 0; }
  .title { color: #fff; }
</style>
